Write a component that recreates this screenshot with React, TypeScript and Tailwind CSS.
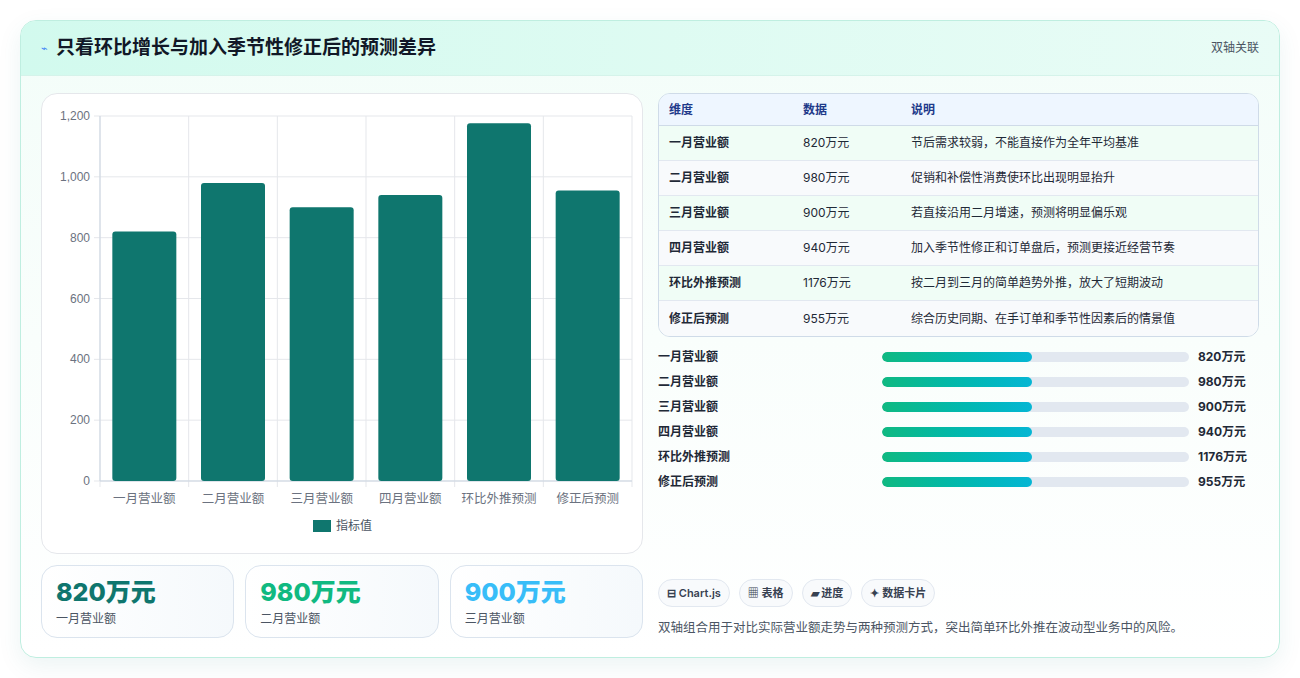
import React from "react";

const bars = [
  ["一月营业额", 820],
  ["二月营业额", 980],
  ["三月营业额", 900],
  ["四月营业额", 940],
  ["环比外推预测", 1176],
  ["修正后预测", 955],
] as const;

const rows = [
  ["一月营业额", "820万元", "节后需求较弱，不能直接作为全年平均基准"],
  ["二月营业额", "980万元", "促销和补偿性消费使环比出现明显抬升"],
  ["三月营业额", "900万元", "若直接沿用二月增速，预测将明显偏乐观"],
  ["四月营业额", "940万元", "加入季节性修正和订单盘后，预测更接近经营节奏"],
  ["环比外推预测", "1176万元", "按二月到三月的简单趋势外推，放大了短期波动"],
  ["修正后预测", "955万元", "综合历史同期、在手订单和季节性因素后的情景值"],
];

function Chart() {
  const x0 = 58, x1 = 590, yTop = 22, yBot = 387;
  const h = yBot - yTop;
  const cw = (x1 - x0) / 6;
  return (
    <svg width="602" height="461" className="block">
      {[0, 200, 400, 600, 800, 1000, 1200].map((v) => {
        const y = yBot - (v / 1200) * h;
        return (
          <g key={v}>
            <line x1={x0 - 6} x2={x1} y1={y} y2={y} stroke="#e5e7eb" />
            <text x={x0 - 10} y={y + 4} textAnchor="end" fontSize="12" fill="#6b7280" fontFamily="Liberation Sans, sans-serif">
              {v.toLocaleString("en-US")}
            </text>
          </g>
        );
      })}
      {Array.from({ length: 7 }).map((_, i) => (
        <line key={i} x1={x0 + i * cw} x2={x0 + i * cw} y1={yTop} y2={yBot + 6} stroke="#e5e7eb" />
      ))}
      <line x1={x0} x2={x1} y1={yBot} y2={yBot} stroke="#cbd5e1" />
      <line x1={x0} x2={x0} y1={yTop} y2={yBot} stroke="#cbd5e1" />
      {bars.map(([l, v], i) => {
        const bh = (v / 1200) * h;
        const cx = x0 + cw * i + cw / 2;
        return (
          <g key={l}>
            <rect x={cx - 32} y={yBot - bh} width={64} height={bh} rx={3} fill="#0f766e" />
            <text x={cx} y={yBot + 22} textAnchor="middle" fontSize="12.5" fill="#6b7280" fontFamily="Noto Sans CJK SC, sans-serif">{l}</text>
          </g>
        );
      })}
      <rect x={271} y={426} width={18} height={12} fill="#0f766e" />
      <text x={294} y={436} fontSize="12" fill="#4b5563" fontFamily="Noto Sans CJK SC, sans-serif">指标值</text>
    </svg>
  );
}

export default function App() {
  return (
    <div className="w-[1300px] h-[678px] bg-white p-5" style={{ fontFamily: "Inter, 'Noto Sans CJK SC', sans-serif" }}>
      <div className="h-[638px] rounded-2xl border border-[#bfeee0] bg-gradient-to-b from-[#f3fdf9] to-white shadow-[0_8px_24px_rgba(15,118,110,0.08)] overflow-hidden flex flex-col">
        <div className="h-[55px] shrink-0 flex items-center justify-between px-5 bg-gradient-to-r from-[#d2faee] to-[#e9fcf6] border-b border-[#d5f3ea]">
          <div className="flex items-center gap-2">
            <span className="text-[11px] text-[#3b82f6]">⌁</span>
            <span className="text-[19px] font-bold text-[#111827]">只看环比增长与加入季节性修正后的预测差异</span>
          </div>
          <span className="text-[12px] text-[#4b5563]">双轴关联</span>
        </div>
        <div className="flex gap-[15px] px-5 pt-[17px]">
          <div className="w-[602px] flex flex-col gap-[11px]">
            <div className="h-[461px] rounded-2xl border border-[#e5e7eb] bg-white"><Chart /></div>
            <div className="grid grid-cols-3 gap-[11px]">
              {[["820万元", "text-[#0f766e]"], ["980万元", "text-[#10b981]"], ["900万元", "text-[#38bdf8]"]].map(([v, c], i) => (
                <div key={v} className="h-[73px] rounded-2xl border border-[#dbe4ee] bg-gradient-to-r from-white to-[#f5f9fc] px-[14px] pt-[10px]">
                  <div className={`text-[25px] font-extrabold leading-[32px] ${c}`}>{v}</div>
                  <div className="text-[12px] text-[#4b5563] mt-[2px]">{rows[i][0]}</div>
                </div>
              ))}
            </div>
          </div>
          <div className="flex-1 flex flex-col">
            <div className="rounded-xl border border-[#cfdbe8] overflow-hidden">
              <div className="h-[32px] flex items-center bg-[#eef6ff] text-[12px] font-bold text-[#1e3a8a] border-b border-[#cfdbe8]">
                <span className="w-[144px] pl-[10px]">维度</span>
                <span className="w-[108px]">数据</span>
                <span>说明</span>
              </div>
              {rows.map((r, i) => (
                <div key={i} className={`h-[35px] flex items-center text-[12px] text-[#1f2937] ${i < 5 ? "border-b border-[#e2e8f0]" : ""} ${i % 2 ? "bg-[#f8fafc]" : "bg-[#f0fdf6]"}`}>
                  <span className="w-[144px] pl-[10px] font-semibold">{r[0]}</span>
                  <span className="w-[108px]">{r[1]}</span>
                  <span>{r[2]}</span>
                </div>
              ))}
            </div>
            <div className="flex flex-col gap-[7px] mt-[11px]">
              {bars.map(([l, v]) => (
                <div key={l} className="h-[18px] flex items-center text-[12px] text-[#1f2937]">
                  <span className="w-[224px] font-semibold">{l}</span>
                  <div className="w-[307px] h-[10px] rounded-full bg-[#e2e8f0] overflow-hidden">
                    <div className="w-[150px] h-full rounded-full bg-gradient-to-r from-[#10b981] to-[#06b6d4]" />
                  </div>
                  <span className="ml-[9px] font-bold">{v}万元</span>
                </div>
              ))}
            </div>
            <div className="flex gap-[9px] mt-[88px]">
              {["⊟ Chart.js", "▦ 表格", "▰ 进度", "✦ 数据卡片"].map((c) => (
                <span key={c} className="h-[28px] px-[8px] flex items-center rounded-full border border-[#e2e8f0] bg-[#f8fafc] text-[11px] font-semibold text-[#374151]">{c}</span>
              ))}
            </div>
            <div className="mt-[12px] text-[12.5px] text-[#4b5563]">双轴组合用于对比实际营业额走势与两种预测方式，突出简单环比外推在波动型业务中的风险。</div>
          </div>
        </div>
      </div>
    </div>
  );
}
